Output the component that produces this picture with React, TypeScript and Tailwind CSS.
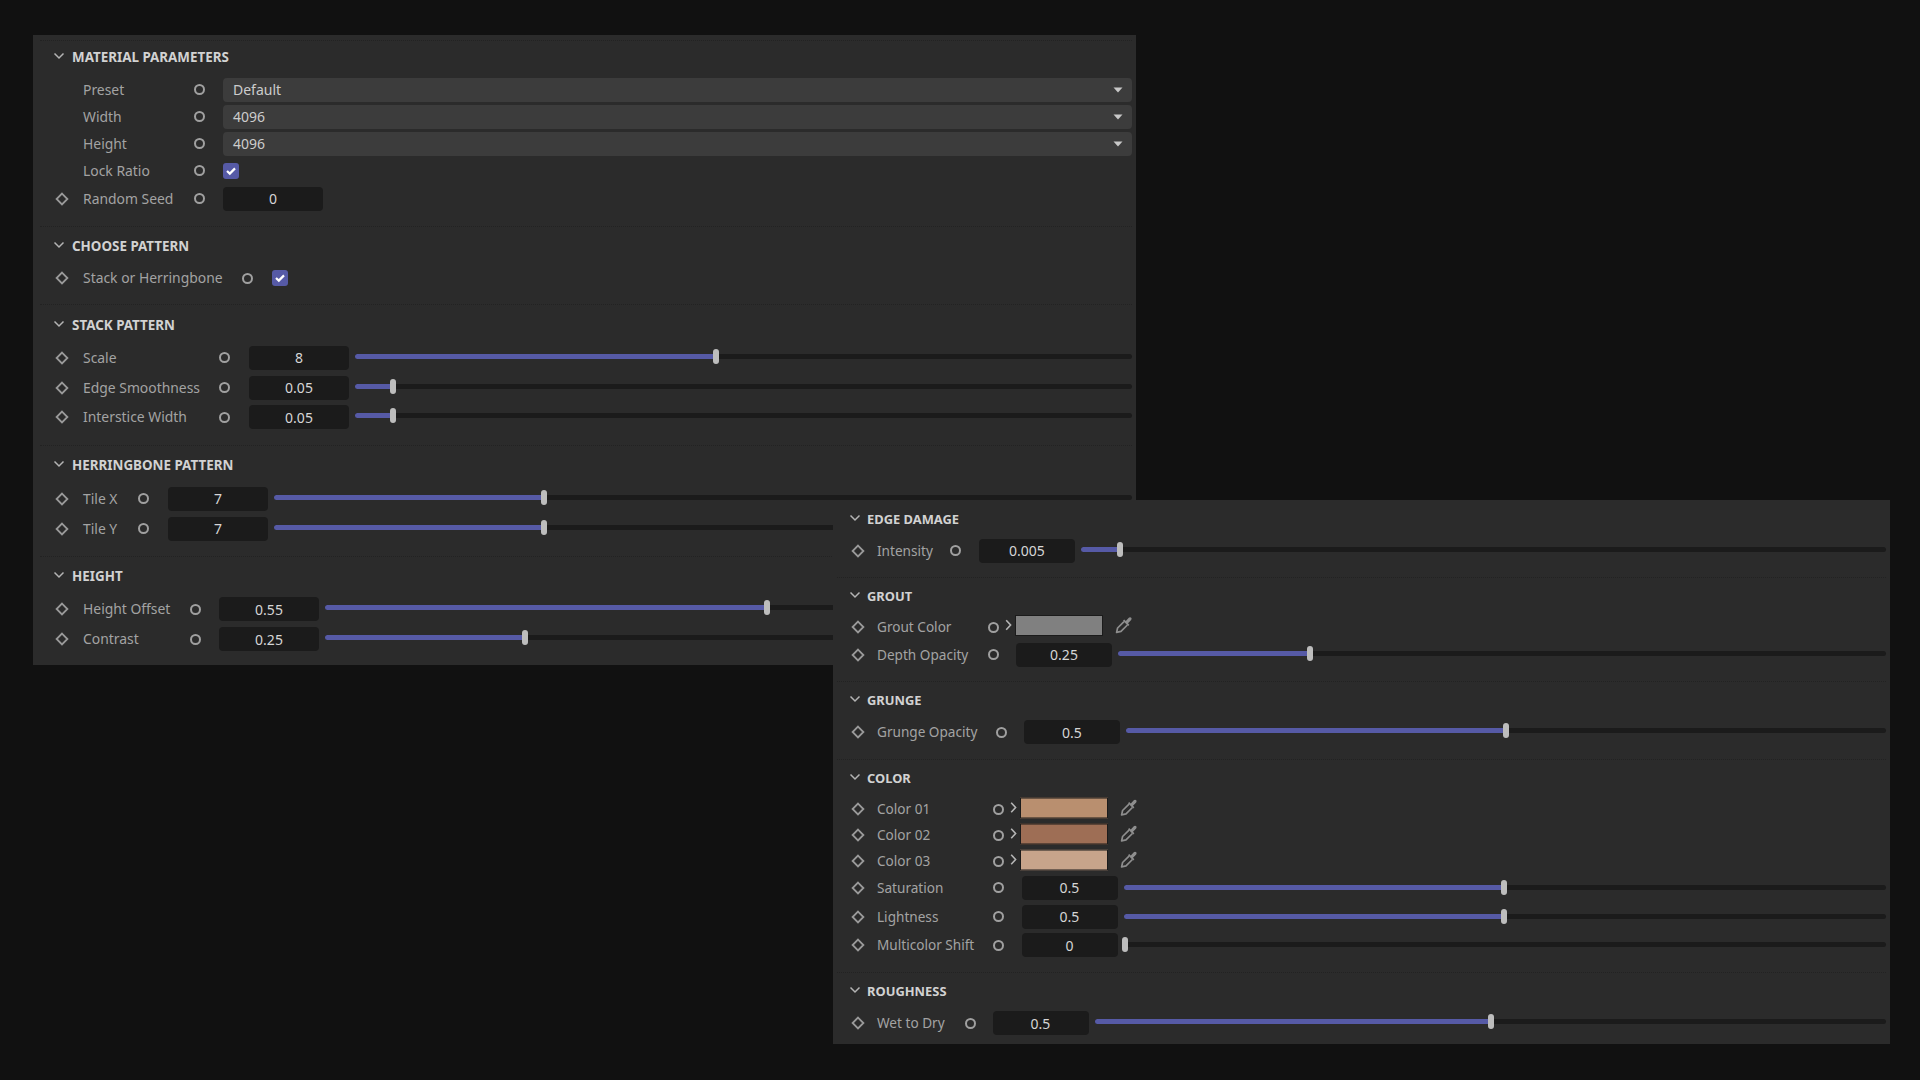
import React from "react";

function Diamond() {
  return (
    <svg width="14" height="14" viewBox="0 0 14 14" className="shrink-0">
      <path d="M7 1.6 L12.4 7 L7 12.4 L1.6 7 Z" fill="none" stroke="#9a9a9a" strokeWidth="1.8" />
    </svg>
  );
}

function Circle() {
  return <div className="h-[11px] w-[11px] shrink-0 rounded-full border-2 border-[#a0a0a0]" />;
}

function Chevron() {
  return (
    <svg width="12" height="8" viewBox="0 0 12 8" className="shrink-0 -translate-y-[1px]">
      <path d="M1.5 1.5 L6 6 L10.5 1.5" fill="none" stroke="#b4b4b4" strokeWidth="1.5" />
    </svg>
  );
}

function Header({ title, pad, slot, size = "text-[13.4px]" }: { title: string; pad: string; slot: string; size?: string }) {
  return (
    <div className={`flex items-center ${pad}`}>
      <div className={`flex h-4 items-center ${slot}`}>
        <Chevron />
      </div>
      <span className={`h-4 font-bold leading-4 text-[#d2d2d2] ${size}`}>{title}</span>
    </div>
  );
}

function Row({
  h,
  label,
  labelW,
  slot,
  size = "text-[13.9px]",
  diamond = true,
  extra = "",
  children,
}: {
  h: string;
  label: string;
  labelW: string;
  slot: string;
  size?: string;
  diamond?: boolean;
  extra?: string;
  children: React.ReactNode;
}) {
  return (
    <div className={`flex items-center ${h} ${extra}`}>
      <div className={`flex items-center ${slot}`}>{diamond ? <Diamond /> : null}</div>
      <div className={`shrink-0 whitespace-nowrap leading-5 text-[#a3a3a3] ${size} ${labelW}`}>{label}</div>
      <Circle />
      {children}
    </div>
  );
}

function Field({ value, w, ml }: { value: string; w: string; ml: string }) {
  return (
    <div className={`flex h-6 shrink-0 items-center justify-center rounded-[4px] bg-[#1b1b1b] text-[14px] text-[#d6d6d6] ${w} ${ml}`}>
      {value}
    </div>
  );
}

function Slider({ fill, lift = "mb-[3px]" }: { fill: number; lift?: string }) {
  return (
    <div className={`relative ml-[6px] h-[5px] flex-1 rounded-full bg-[#1b1b1b] ${lift}`}>
      <div className="h-full rounded-l-full bg-[#565aa6]" style={{ width: fill }} />
      <div
        className="absolute top-[-5px] h-[15px] w-[6px] -translate-x-1/2 rounded-full bg-[#bdbdbd]"
        style={{ left: fill }}
      />
    </div>
  );
}

function Dropdown({ value }: { value: string }) {
  return (
    <div className="ml-[18.5px] flex h-6 flex-1 items-center justify-between rounded-[4px] bg-[#3c3c3c] pl-[10px] pr-[9px] text-[14px] text-[#cccccc]">
      <span>{value}</span>
      <svg width="10" height="6" viewBox="0 0 10 6">
        <path d="M0.5 0.5 H9.5 L5 5.5 Z" fill="#c8c8c8" />
      </svg>
    </div>
  );
}

function Check({ ml }: { ml: string }) {
  return (
    <div className={`flex h-4 w-4 shrink-0 items-center justify-center rounded-[3px] bg-[#565aa6] ${ml}`}>
      <svg width="12" height="10" viewBox="0 0 12 10">
        <path d="M2 5 L4.8 7.6 L10 2.4" fill="none" stroke="#ffffff" strokeWidth="2.2" />
      </svg>
    </div>
  );
}

function Dropper() {
  return (
    <svg width="18" height="18" viewBox="0 0 18 18" className="shrink-0">
      <path d="M9 5.6 L2.6 12 L1.6 16.4 L6 15.4 L12.4 9" fill="none" stroke="#8e8e8e" strokeWidth="1.7" strokeLinejoin="round" />
      <path d="M8 4.8 L13.2 10 L14.4 8.8 L13 7.2 L16.2 4 Q17.2 2.6 16 1.6 Q14.8 0.8 13.8 1.8 L10.8 5 L9.2 3.6 Z" fill="#8e8e8e" />
    </svg>
  );
}

function Arrow() {
  return (
    <svg width="7" height="12" viewBox="0 0 7 12" className="shrink-0">
      <path d="M1.2 1.2 L5.6 6 L1.2 10.8" fill="none" stroke="#b4b4b4" strokeWidth="1.6" />
    </svg>
  );
}

function Swatch({ color }: { color: string }) {
  return <div className="h-[21px] w-[88px] shrink-0 border border-[#1b1b1b]" style={{ backgroundColor: color }} />;
}

const sep = "border-b border-dotted border-[#222222]";
const s1 = "w-[28px]";
const s2 = "w-[26px]";
const hs1 = "w-[19px]";
const hs2 = "w-[18px]";
const small = "text-[13.6px]";
const hSmall = "text-[12.9px]";

export default function App() {
  return (
    <div
      className="relative h-[1080px] w-[1920px] overflow-hidden bg-[#111111]"
      style={{ fontFamily: '"Noto Sans", "Open Sans", sans-serif' }}
    >
      {/* Panel one */}
      <div className="absolute left-[33px] top-[35px] h-[630px] w-[1103px] bg-[#2b2b2b] pl-[7px] pr-[4px] pt-[5px]">
        <section className={`h-[187px] border-t border-dotted border-[#222222] pl-[13px] ${sep}`}>
          <Header title="MATERIAL PARAMETERS" pad="pt-[8px] pb-[11px]" slot={hs1} />
          <div className="pl-[2px]">
            <Row h="h-[27px]" label="Preset" labelW="w-[110.5px]" slot={s1} diamond={false}>
              <Dropdown value="Default" />
            </Row>
            <Row h="h-[27px]" label="Width" labelW="w-[110.5px]" slot={s1} diamond={false}>
              <Dropdown value="4096" />
            </Row>
            <Row h="h-[27px]" label="Height" labelW="w-[110.5px]" slot={s1} diamond={false}>
              <Dropdown value="4096" />
            </Row>
            <Row h="h-[27px]" label="Lock Ratio" labelW="w-[110.5px]" slot={s1} diamond={false}>
              <Check ml="ml-[18.5px]" />
            </Row>
            <Row h="h-[27px]" extra="mt-[1px]" label="Random Seed" labelW="w-[110.5px]" slot={s1}>
              <Field value="0" w="w-[100px]" ml="ml-[18.5px]" />
            </Row>
          </div>
        </section>

        <section className={`h-[78px] pl-[13px] ${sep}`}>
          <Header title="CHOOSE PATTERN" pad="pt-[11px] pb-[9px]" slot={hs1} />
          <div className="pl-[2px]">
            <Row h="h-[30px]" label="Stack or Herringbone" labelW="w-[159px]" slot={s1}>
              <Check ml="ml-[19px]" />
            </Row>
          </div>
        </section>

        <section className={`h-[141px] pl-[13px] ${sep}`}>
          <Header title="STACK PATTERN" pad="pt-[12px] pb-[10px]" slot={hs1} />
          <div className="pl-[2px]">
            <Row h="h-[29.7px]" label="Scale" labelW="w-[136px]" slot={s1}>
              <Field value="8" w="w-[100px]" ml="ml-[19px]" />
              <Slider fill={361} />
            </Row>
            <Row h="h-[29.7px]" label="Edge Smoothness" labelW="w-[136px]" slot={s1}>
              <Field value="0.05" w="w-[100px]" ml="ml-[19px]" />
              <Slider fill={38} />
            </Row>
            <Row h="h-[29.7px]" label="Interstice Width" labelW="w-[136px]" slot={s1}>
              <Field value="0.05" w="w-[100px]" ml="ml-[19px]" />
              <Slider fill={38} />
            </Row>
          </div>
        </section>

        <section className={`h-[111px] pl-[13px] ${sep}`}>
          <Header title="HERRINGBONE PATTERN" pad="pt-[11px] pb-[11px]" slot={hs1} />
          <div className="pl-[2px]">
            <Row h="h-[29.7px]" label="Tile X" labelW="w-[55px]" slot={s1}>
              <Field value="7" w="w-[100px]" ml="ml-[19px]" />
              <Slider fill={270} />
            </Row>
            <Row h="h-[29.7px]" label="Tile Y" labelW="w-[55px]" slot={s1}>
              <Field value="7" w="w-[100px]" ml="ml-[19px]" />
              <Slider fill={270} />
            </Row>
          </div>
        </section>

        <section className="pl-[13px]">
          <Header title="HEIGHT" pad="pt-[11px] pb-[10px]" slot={hs1} />
          <div className="pl-[2px]">
            <Row h="h-[30px]" label="Height Offset" labelW="w-[106.5px]" slot={s1}>
              <Field value="0.55" w="w-[100px]" ml="ml-[18.5px]" />
              <Slider fill={442} />
            </Row>
            <Row h="h-[30px]" label="Contrast" labelW="w-[106.5px]" slot={s1}>
              <Field value="0.25" w="w-[100px]" ml="ml-[18.5px]" />
              <Slider fill={200} />
            </Row>
          </div>
        </section>
      </div>

      {/* Panel two */}
      <div className="absolute left-[833px] top-[500px] h-[544px] w-[1057px] bg-[#2b2b2b] pl-[4px] pr-[4px]">
        <section className={`h-[78px] pl-[12px] ${sep}`}>
          <Header title="EDGE DAMAGE" pad="pt-[10.5px] pb-[9px]" slot={hs2} size={hSmall} />
          <div className="pl-[2px]">
            <Row h="h-[30px]" size={small} label="Intensity" labelW="w-[73px]" slot={s2}>
              <Field value="0.005" w="w-[96px]" ml="ml-[18px]" />
              <Slider fill={39} />
            </Row>
          </div>
        </section>

        <section className={`h-[104px] pl-[12px] ${sep}`}>
          <Header title="GROUT" pad="pt-[10px] pb-[9.5px]" slot={hs2} size={hSmall} />
          <div className="pl-[2px]">
            <Row h="h-[27.5px]" size={small} label="Grout Color" labelW="w-[111px]" slot={s2}>
              <div className="ml-[6px] flex -translate-y-[2px] items-center gap-[3px]">
                <Arrow />
                <Swatch color="#808080" />
                <div className="ml-[9px]"><Dropper /></div>
              </div>
            </Row>
            <Row h="h-[27.5px]" size={small} label="Depth Opacity" labelW="w-[111px]" slot={s2}>
              <Field value="0.25" w="w-[96px]" ml="ml-[17px]" />
              <Slider fill={192} />
            </Row>
          </div>
        </section>

        <section className={`h-[78px] pl-[12px] ${sep}`}>
          <Header title="GRUNGE" pad="pt-[10px] pb-[9px]" slot={hs2} size={hSmall} />
          <div className="pl-[2px]">
            <Row h="h-[30px]" size={small} label="Grunge Opacity" labelW="w-[119px]" slot={s2}>
              <Field value="0.5" w="w-[96px]" ml="ml-[17px]" />
              <Slider fill={380} />
            </Row>
          </div>
        </section>

        <section className={`h-[213px] pl-[12px] ${sep}`}>
          <Header title="COLOR" pad="pt-[10px] pb-[10px]" slot={hs2} size={hSmall} />
          <div className="pl-[2px]">
            {[
              ["Color 01", "#b98f6f"],
              ["Color 02", "#9e6e55"],
              ["Color 03", "#c7a48b"],
            ].map(([n, c]) => (
              <Row key={n} h="h-[26px]" size={small} label={n} labelW="w-[116px]" slot={s2}>
                <div className="ml-[6px] flex -translate-y-[1.5px] items-center gap-[3px]">
                  <Arrow />
                  <Swatch color={c} />
                  <div className="ml-[9px]"><Dropper /></div>
                </div>
              </Row>
            ))}
            <Row h="h-[28.8px]" extra="-mt-[0.5px]" size={small} label="Saturation" labelW="w-[116px]" slot={s2}>
              <Field value="0.5" w="w-[96px]" ml="ml-[17.5px]" />
              <Slider fill={380} lift="mb-[1px]" />
            </Row>
            <Row h="h-[28.8px]" size={small} label="Lightness" labelW="w-[116px]" slot={s2}>
              <Field value="0.5" w="w-[96px]" ml="ml-[17.5px]" />
              <Slider fill={380} lift="mb-[1px]" />
            </Row>
            <Row h="h-[28.8px]" size={small} label="Multicolor Shift" labelW="w-[116px]" slot={s2}>
              <Field value="0" w="w-[96px]" ml="ml-[17.5px]" />
              <Slider fill={1} lift="mb-[1px]" />
            </Row>
          </div>
        </section>

        <section className="pl-[12px]">
          <Header title="ROUGHNESS" pad="pt-[10px] pb-[9px]" slot={hs2} size={hSmall} />
          <div className="pl-[2px]">
            <Row h="h-[30px]" size={small} label="Wet to Dry" labelW="w-[87.5px]" slot={s2}>
              <Field value="0.5" w="w-[96px]" ml="ml-[17px]" />
              <Slider fill={396} />
            </Row>
          </div>
        </section>
      </div>
    </div>
  );
}
